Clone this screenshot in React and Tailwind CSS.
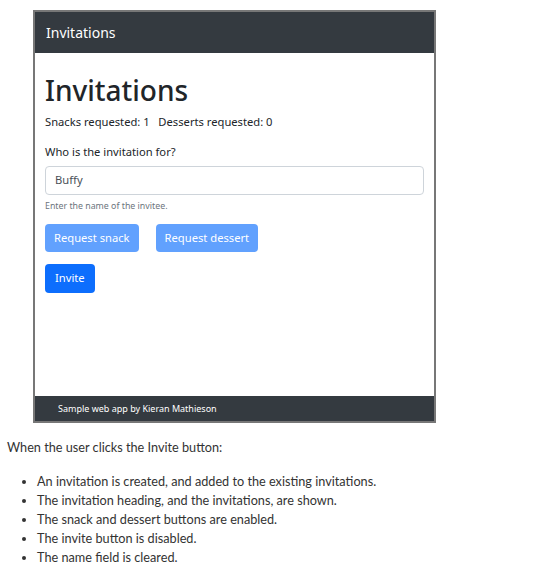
export default function App() {
  const inner = { fontFamily: '"Noto Sans", "Open Sans", sans-serif' }
  const outer = { fontFamily: '"Lato", "Open Sans", sans-serif' }

  return (
    <div className="bg-white w-[539px] h-[580px] overflow-hidden">
      <div className="pt-[10px] pl-[33px]">
        <div
          className="flex h-[413px] w-[403px] flex-col border-2 border-[#777777] text-[#212529]"
          style={inner}
        >
          <div className="flex h-[41px] items-center bg-[#343a40] px-[11px] text-[14px] text-white">Invitations</div>
          <div className="flex-1 px-[10px] pt-[18px]">
            <h1 className="text-[28px] leading-[38px] font-medium">Invitations</h1>
            <p className="mt-[4px] text-[11.2px] leading-[18px]">
              Snacks requested: 1&nbsp;&nbsp;&nbsp;Desserts requested: 0
            </p>
            <p className="mt-[12px] text-[11.2px] leading-[18px]">Who is the invitation for?</p>
            <div className="mt-[5px] flex h-[29px] items-center rounded-[4px] border border-[#ced4da] px-[9px] text-[11.2px] text-[#495057]">
              Buffy
            </div>
            <p className="mt-[4px] text-[8.8px] leading-[14px] text-[#6c757d]">Enter the name of the invitee.</p>
            <div className="mt-[11px] flex gap-[17px]">
              <button className="h-[28px] rounded-[4px] bg-[#61a1fe] px-[9px] text-[11.2px] text-white">Request snack</button>
              <button className="h-[28px] rounded-[4px] bg-[#61a1fe] px-[9px] text-[11.2px] text-white">Request dessert</button>
            </div>
            <button className="mt-[12px] h-[29px] rounded-[4px] bg-[#0d6efd] px-[10px] text-[11.2px] text-white">Invite</button>
          </div>
          <div className="flex h-[25px] items-center bg-[#343a40] px-[23px] text-[9px] text-white">
            Sample web app by Kieran Mathieson
          </div>
        </div>
      </div>
      <div className="pl-[7px] text-[12.7px] text-[#333333]" style={outer}>
        <p className="mt-[15px] leading-[19px]">When the user clicks the Invite button:</p>
        <ul className="mt-[15px] list-disc pl-[30px] leading-[19px]">
          <li>An invitation is created, and added to the existing invitations.</li>
          <li>The invitation heading, and the invitations, are shown.</li>
          <li>The snack and dessert buttons are enabled.</li>
          <li>The invite button is disabled.</li>
          <li>The name field is cleared.</li>
        </ul>
      </div>
    </div>
  )
}
